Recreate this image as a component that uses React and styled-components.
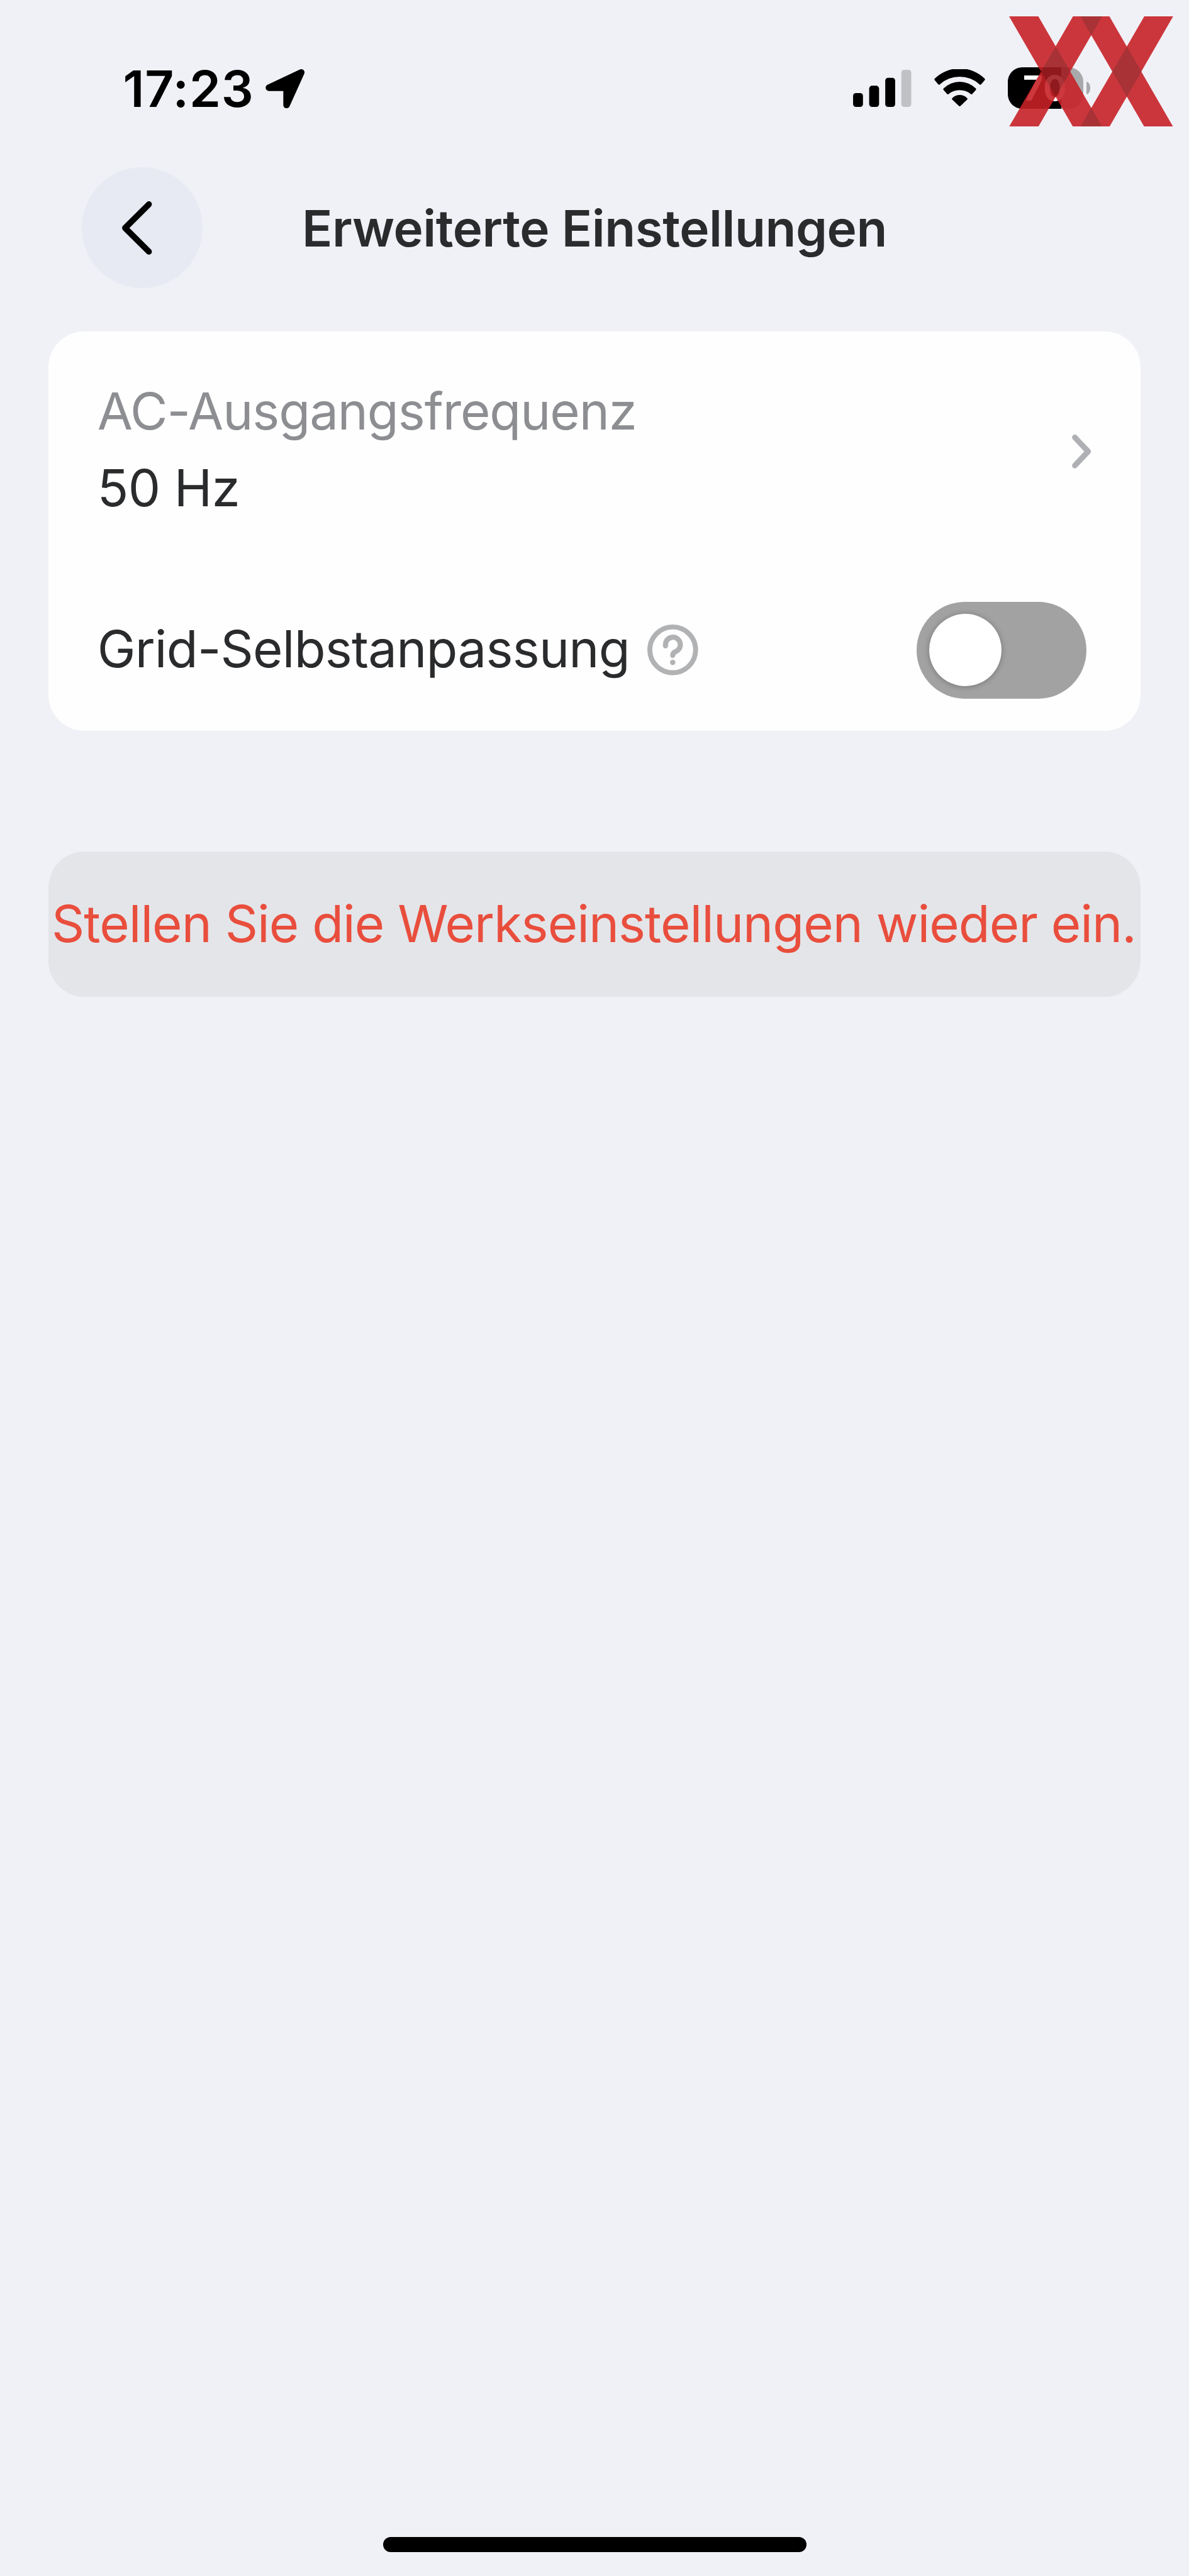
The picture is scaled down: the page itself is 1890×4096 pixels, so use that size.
import { useState } from "react";
import styled, { createGlobalStyle } from "styled-components";

const GlobalStyle = createGlobalStyle`
  * {
    box-sizing: border-box;
  }

  body {
    margin: 0;
    background-color: #f0f1f6;
  }

  button {
    border: none;
    padding: 0;
    font: inherit;
    cursor: pointer;
  }

  svg {
    display: block;
    flex-shrink: 0;
  }
`;

const Page = styled.div`
  display: flex;
  flex-direction: column;
  width: 1890px;
  height: 4096px;
  position: relative;
  overflow: hidden;
  background-color: #f0f1f6;
  color: #2a2b2d;
  font-family: Inter, "Liberation Sans", sans-serif;
`;

/* Status bar */

const StatusBar = styled.div`
  display: flex;
  align-items: center;
  justify-content: space-between;
  height: 265.8px;
  padding: 14.4px 157.2px 0 195.5px;
  color: black;
`;

const StatusLeft = styled.div`
  display: flex;
  align-items: center;
  gap: 18px;
  padding-top: 2px;
`;

const StatusRight = styled.div`
  display: flex;
  align-items: center;
  gap: 36px;
`;

const Clock = styled.span`
  font-size: 80.3px;
  font-weight: 600;
  line-height: 98px;
  letter-spacing: 0.8px;
`;

const BatteryLayout = styled.div`
  display: flex;
  align-items: center;
  gap: 4.6px;
`;

const BatteryBody = styled.div`
  width: 120.2px;
  height: 66.3px;
  padding-left: 24.2px;
  border-radius: 23px;
  background: linear-gradient(to right, black 70.8%, #a7a9ab 70.8%);
  color: white;
  font-size: 55px;
  font-weight: 700;
  line-height: 66.3px;
  letter-spacing: 1px;
`;

const BatteryCap = styled.div`
  width: 6.2px;
  height: 20px;
  border-radius: 0 100% 100% 0 / 0 50% 50% 0;
  background-color: #a7a9ab;
`;

// Logo liegt über der Statusleiste
const Watermark = styled.svg`
  position: absolute;
  top: 25.9px;
  left: 1603.9px;
`;

/* Header */

const Header = styled.header`
  display: grid;
  grid-template-columns: 192.6px 1fr 192.6px;
  align-items: center;
  height: 192.6px;
  padding: 0 129.9px;
`;

const BackButton = styled.button`
  display: flex;
  align-items: center;
  justify-content: center;
  width: 192.6px;
  height: 192.6px;
  padding-right: 16.6px;
  border-radius: 50%;
  background-color: #e7eaf3;
`;

const Title = styled.h1`
  margin: 0;
  padding-top: 2px;
  text-align: center;
  font-size: 80px;
  font-weight: 600;
  line-height: 98px;
  letter-spacing: -0.47px;
  white-space: nowrap;
`;

/* Content */

const Card = styled.section`
  width: 1736.3px;
  height: 635.7px;
  margin: 68.2px 0 0 76.7px;
  border-radius: 57px;
  background-color: #fefefe;
`;

const Row = styled.div`
  display: flex;
  align-items: center;
  justify-content: space-between;
  height: ${(props) => props.$height}px;
  padding: 0 ${(props) => props.$right}px 0 78px;
`;

const RowText = styled.div`
  display: flex;
  flex-direction: column;
  padding-bottom: 5px;
`;

const Label = styled.span`
  font-size: 81.5px;
  line-height: 122px;
  white-space: nowrap;
  color: ${(props) => (props.$muted ? "#8d8e92" : "#2a2b2d")};
  letter-spacing: ${(props) => props.$spacing}px;
`;

const LabelGroup = styled.div`
  display: flex;
  align-items: center;
  gap: 28px;

  ${Label} {
    margin-top: -3px;
  }
`;

const Switch = styled.button`
  display: flex;
  align-items: center;
  justify-content: ${(props) => (props.$on ? "flex-end" : "flex-start")};
  width: 269.7px;
  height: 153.7px;
  padding: 0 19.5px;
  border-radius: 77px;
  background-color: ${(props) => (props.$on ? "#34c759" : "#a2a2a2")};
`;

const Knob = styled.span`
  width: 115.4px;
  height: 115.4px;
  border-radius: 50%;
  background-color: white;
  box-shadow: 0 1px 10px rgba(0, 0, 0, 0.28);
`;

const ResetButton = styled.button`
  display: flex;
  align-items: center;
  justify-content: center;
  width: 1736.3px;
  height: 231px;
  margin: 191.8px 0 0 76.7px;
  padding: 0 2px 2px 0;
  border-radius: 57px;
  background-color: #e4e5e9;
  color: #e94e3d;
  font-size: 81.5px;
  letter-spacing: -1px;
  white-space: nowrap;
`;

const HomeIndicator = styled.div`
  width: 673px;
  height: 24.3px;
  margin: auto auto 37.8px;
  border-radius: 12.2px;
  background-color: black;
`;

const LocationIcon = () => (
  <svg width="62.4" height="62.4" viewBox="0 0 63.4 63.4">
    <path
      d="M5.6 29.9 57.8 5.3 34.1 57.9V29.9Z"
      fill="black"
      stroke="black"
      strokeWidth="10.6"
      strokeLinejoin="round"
    />
  </svg>
);

const SignalIcon = () => (
  <svg width="92.5" height="59" viewBox="0 0 94 60">
    <rect x="0" y="37.6" width="16" height="22.4" rx="4.6" />
    <rect x="26" y="25.8" width="16" height="34.2" rx="4.6" />
    <rect x="52" y="12.9" width="16" height="47.1" rx="4.6" />
    <rect x="78" y="0" width="16" height="60" rx="4.6" fill="#bfc1c5" />
  </svg>
);

const WifiIcon = () => (
  <svg width="81" height="59.2" viewBox="0 0 82.2 60.1">
    <path d="M1 17.9Q-.6 16.5 1 14.9A57.9 57.9 0 0 1 81.2 14.9Q82.8 16.5 81.2 17.9L75.6 24.5Q74.6 25.8 73.2 24.6A47.5 47.5 0 0 0 9 24.6Q7.6 25.8 6.6 24.5Z" />
    <path d="M15.2 33.7Q13.8 32.3 15.2 31A36.5 36.5 0 0 1 67 31Q68.4 32.3 67 33.7L61.4 40.1Q60.2 41.3 58.9 40.2A27.5 27.5 0 0 0 23.3 40.2Q22 41.3 20.8 40.1Z" />
    <path d="M29.2 49.3Q27.8 48 29.2 46.7A16.5 16.5 0 0 1 53 46.7Q54.4 48 53 49.3L42.3 59.4Q41.1 60.5 39.9 59.4Z" />
  </svg>
);

const BackIcon = () => (
  <svg width="47.5" height="85" viewBox="0 0 48.3 86.4" fill="none">
    <path
      d="M43.4 4.9 4.9 43.2 43.4 81.5"
      stroke="black"
      strokeWidth="9.7"
      strokeLinecap="round"
      strokeLinejoin="round"
    />
  </svg>
);

const ChevronIcon = () => (
  <svg width="30.2" height="53.8" viewBox="0 0 30.7 54.7" fill="none">
    <path
      d="M4.6 4.6 26.1 27.35 4.6 50.1"
      stroke="#aeb0b3"
      strokeWidth="9"
      strokeLinecap="round"
      strokeLinejoin="round"
    />
  </svg>
);

const HelpIcon = () => (
  <svg width="80.7" height="80.7" viewBox="0 0 82 82" fill="none">
    <circle cx="41" cy="41" r="37" stroke="#b0b2b4" strokeWidth="8" />
    <path
      d="M29.3 34.4V32.7A12 12 0 1 1 46.3 43.4Q41 45.6 41 49.8"
      stroke="#b0b2b4"
      strokeWidth="8.4"
      strokeLinecap="round"
      strokeLinejoin="round"
    />
    <circle cx="41" cy="61.3" r="4.3" fill="#b0b2b4" />
  </svg>
);

const Logo = () => (
  <Watermark width="260.8" height="175.6" viewBox="0 0 264.9 178.3">
    <g opacity="0.895">
      <g fill="#c72127">
        <path d="M0 0H47.2L150.3 178.3H103.2Z" />
        <path d="M103.2 0H150.3L47.2 178.3H0Z" />
        <path d="M115.1 0H162L264.9 178.3H218.3Z" />
        <path d="M218.3 0H264.9L162 178.3H115.1Z" />
      </g>
      <g fill="#a01c20">
        <path d="M75.3 48.6 98.8 89.15 75.3 129.7 51.6 89.15Z" />
        <path d="M190.2 48.6 213.7 89.15 190.2 129.7 166.6 89.15Z" />
        <path d="M115.1 0H150.3L132.7 30.6Z" />
        <path d="M115.1 178.3H150.3L132.7 147.7Z" />
      </g>
    </g>
  </Watermark>
);

const App = () => {
  const [adaptive, setAdaptive] = useState(false);

  return (
    <>
      <GlobalStyle />
      <Page>
        <StatusBar>
          <StatusLeft>
            <Clock>17:23</Clock>
            <LocationIcon />
          </StatusLeft>
          <StatusRight>
            <SignalIcon />
            <WifiIcon />
            <BatteryLayout>
              <BatteryBody>70</BatteryBody>
              <BatteryCap />
            </BatteryLayout>
          </StatusRight>
        </StatusBar>
        <Logo />

        <Header>
          <BackButton aria-label="Zurück">
            <BackIcon />
          </BackButton>
          <Title>Erweiterte Einstellungen</Title>
        </Header>

        <Card>
          <Row $height={382.4} $right={78.7}>
            <RowText>
              <Label $muted $spacing={-1.1}>
                AC-Ausgangsfrequenz
              </Label>
              <Label $spacing={-0.6}>50 Hz</Label>
            </RowText>
            <ChevronIcon />
          </Row>
          <Row $height={249.6} $right={86.3}>
            <LabelGroup>
              <Label $spacing={-0.8}>Grid-Selbstanpassung</Label>
              <HelpIcon />
            </LabelGroup>
            <Switch
              role="switch"
              aria-checked={adaptive}
              $on={adaptive}
              onClick={() => setAdaptive(!adaptive)}
            >
              <Knob />
            </Switch>
          </Row>
        </Card>

        <ResetButton>Stellen Sie die Werkseinstellungen wieder ein.</ResetButton>

        <HomeIndicator />
      </Page>
    </>
  );
};

export default App;
